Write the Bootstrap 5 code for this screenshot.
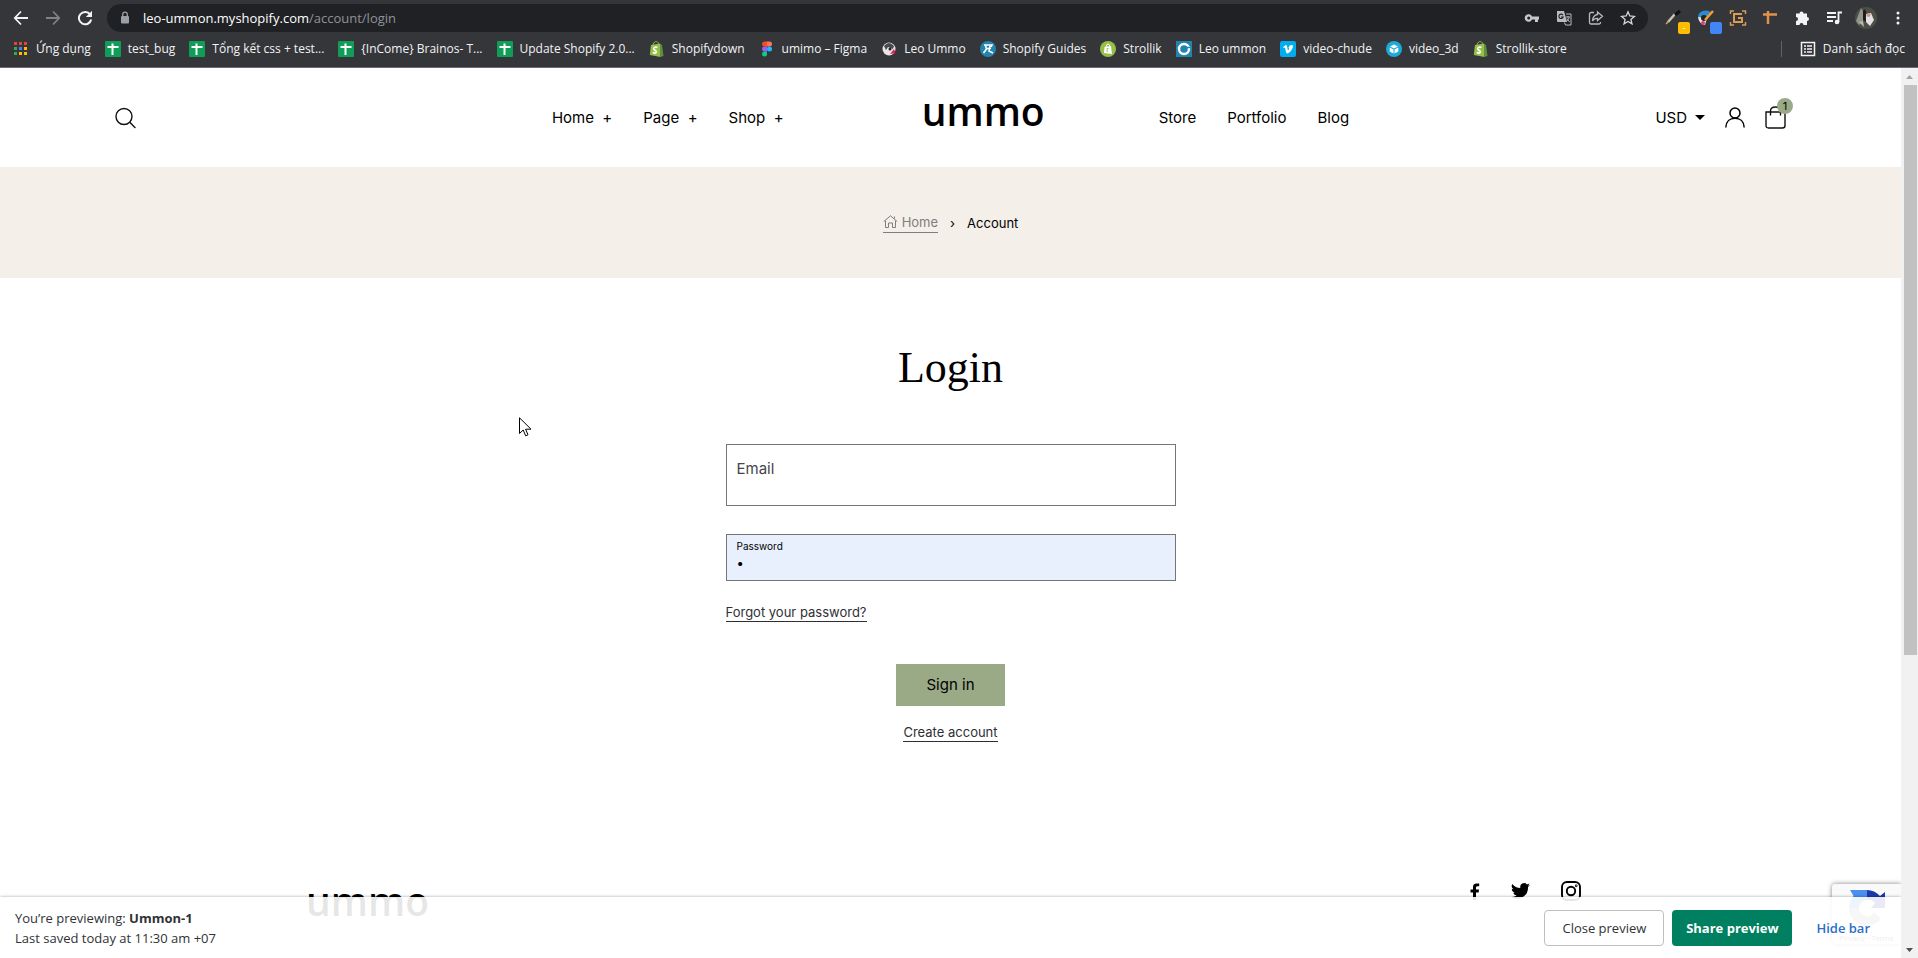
<!DOCTYPE html>
<html lang="en">
<head>
<meta charset="utf-8">
<meta name="viewport" content="width=device-width, initial-scale=1">
<title>Account – Ummo</title>
<link href="https://cdn.jsdelivr.net/npm/bootstrap@5.3.0/dist/css/bootstrap.min.css" rel="stylesheet">
<style>
  :root { --ui: "Open Sans", "Noto Sans", sans-serif; --sage: #9aaa86; --ink: #2f2f33; }
  body { font-family: Inter, "Liberation Sans", sans-serif; font-size: 15px; line-height: 20px; color: #000; }
  a { color: inherit; text-decoration: none; }
  svg { display: block; flex: none; }
  .plain { background: none; border: 0; padding: 0; color: inherit; }

  /* browser toolbar */
  .chrome { background: #35363a; color: #f1f3f4; font-family: var(--ui); border-bottom: 1px solid #6a6b6e; }
  .toolbar { height: 35px; padding: 0 10px 0 11px; gap: 12px; }
  .omnibox { background: #202124; height: 28px; padding: 0 10px 0 12px; font-size: 13px; color: #fff; margin-right: 4px; }
  .omnibox .path { color: #8f9397; }
  .slot { width: 20px; height: 22px; display: flex; align-items: center; justify-content: center; position: relative; }
  .tip { position: absolute; right: -6px; bottom: -5px; width: 12px; height: 12px; border-radius: 2px; font-size: 9px; line-height: 11px; text-align: center; color: #fff; }
  .bookmarks { height: 32px; padding: 0 13px; font-size: 12px; line-height: 16px; white-space: nowrap; padding-bottom: 4px; }
  .bookmarks ul { gap: 14px; }
  .bookmarks a { gap: 7px; }
  .sep { width: 1px; height: 16px; background: #5f6368; margin-right: 11px; }

  /* store page */
  .store-head { height: 99px; padding: 0 115px; display: grid; grid-template-columns: 1fr auto 1fr; align-items: center; }
  .store-head ul { gap: 31px; }
  .wordmark { font: 600 39px/40px "Open Sans", sans-serif; color: #000; }
  .store-head .wordmark { margin: 0 114px 0 138px; margin-top: -14px; }
  .cart-count { position: absolute; left: 12px; top: -8px; width: 16px; height: 16px; border-radius: 50%; background: var(--sage); font-size: 11px; line-height: 16px; text-align: center; }
  .crumbs { background: #f4efe9; height: 111px; font-size: 13px; }
  .crumbs .home { color: #807d7a; border-bottom: 1px solid #807d7a; }
  h1 { font: 400 44px/52px "Liberation Serif", serif; margin: 64px 0 50px; }
  .login { width: 450px; margin: 0 auto; }
  .field { border: 1px solid #75757a; border-radius: 0; padding: 0 10px; }
  .mail { height: 62px; padding-bottom: 14px; width: 100%; color: #000; }
  .mail::placeholder { color: #45454a; opacity: 1; }
  .secret { height: 47px; background: #e8f0fe; padding-top: 4px; }
  .secret label { font-size: 10px; line-height: 14px; display: block; }
  .secret input { background: none; border: 0; padding: 0; display: block; width: 100%; font-size: 13px; line-height: 20px; height: 20px; outline: 0; }
  .ul-link { display: inline-block; font-size: 13px; line-height: 18px; color: var(--ink); border-bottom: 1px solid var(--ink); }
  .signin { background: var(--sage); border: 0; height: 42px; width: 109px; }
  .store-foot { padding: 0 320px 0 306px; margin-top: 139px; }

  /* overlays */
  .captcha { position: absolute; right: 0; bottom: 14px; width: 69px; height: 60px; background: #fafafa; border-radius: 3px 0 0 3px; box-shadow: 0 0 5px #808080; font: 8px/10px Roboto, sans-serif; color: #555; }
  .preview { position: absolute; left: 0; right: 0; bottom: 0; height: 61px; padding: 0 31px 0 15px; background: rgba(255,255,255,.9); box-shadow: 0 0 3px rgba(0,0,0,.35); font: 13px/20px var(--ui); color: #303236; }
  .preview .btn { height: 36px; font: 600 13px/20px var(--ui); border-radius: 4px; padding: 0; width: 120px; }
  .preview .close-it { border: 1px solid #babfc3; background: #fff; color: #303236; font-weight: 500; }
  .preview .share-it { background: #008060; color: #fff; font-weight: 700; margin: 0 24px 0 8px; }
  .preview .hide-it { color: #2c6ecb; font-weight: 600; }
  .pointer { position: absolute; left: 519px; top: 349px; }

  .rail { width: 17px; background: #f1f1f1; }
  .rail .thumb { background: #c1c1c1; margin: 0 1px 0 3px; height: 64%; }
  .rail .arrow { height: 17px; display: flex; align-items: center; justify-content: center; }
</style>
</head>
<body class="vh-100 d-flex flex-column overflow-hidden">

<svg width="0" height="0" class="position-absolute" aria-hidden="true">
  <symbol id="sheet" viewBox="0 0 16 16"><rect width="16" height="16" rx="1" fill="#0f9d58"/><path d="M2.500 6H13.500M7.500 2.500V14" stroke="#fff" stroke-width="2"/></symbol>
  <symbol id="shopbag" viewBox="0 0 16 16"><path d="M2 4 11 2.500 11.500 16 .8 14Z" fill="#95bf47"/><path d="M11 2.500 13 4 14.500 15 11 16Z" fill="#5e8e3e"/><path d="M4 4C4.500 1 6.500.5 7.500.6 9 .8 9.500 2 9.500 3.500" fill="none" stroke="#95bf47"/><path d="M8.500 6.500C6.500 5.500 4.500 6.300 4.800 7.800 5 9.200 7.600 9.300 7.300 11 7 12.500 5 12.200 3.800 11.300" fill="none" stroke="#fff" stroke-width="1.700"/></symbol>
</svg>

<header class="chrome">
  <div class="toolbar d-flex align-items-center">
    <button class="plain slot" aria-label="Back"><svg width="16" height="16" viewBox="0 0 16 16" fill="none" stroke="#f1f3f4" stroke-width="1.800"><path d="M15 8H2M8 1.500 1.800 8 8 14.500"/></svg></button>
    <button class="plain slot" aria-label="Forward"><svg width="16" height="16" viewBox="0 0 16 16" fill="none" stroke="#828387" stroke-width="1.800"><path d="M1 8H14M8 1.500 14.200 8 8 14.500"/></svg></button>
    <button class="plain slot" aria-label="Reload"><svg width="16" height="16" viewBox="0 0 16 16"><path d="M13.200 4.500A6.200 6.200 0 1 0 14.200 9.500" fill="none" stroke="#f1f3f4" stroke-width="2"/><path d="M15 .8V7H8.800Z" fill="#f1f3f4"/></svg></button>
    <div class="omnibox rounded-pill flex-grow-1 d-flex align-items-center">
      <svg width="12" height="14" viewBox="0 0 12 14"><rect x="2" y="5" width="8" height="7.500" rx="1" fill="#9aa0a6"/><path d="M3.700 5V3.500a2.300 2.300 0 0 1 4.600 0V5" fill="none" stroke="#9aa0a6" stroke-width="1.300"/></svg>
      <div class="ms-2 ps-1 flex-grow-1">leo-ummon.myshopify.com<span class="path">/account/login</span></div>
      <div class="d-flex toolbar-icons" style="gap:12px">
        <button class="plain slot" aria-label="Passwords"><svg width="16" height="14" viewBox="0 0 16 14"><path fill="#c4c7ca" fill-rule="evenodd" d="M8 5.500H15V8.500H14V11H11V8.500H8A3.800 3.800 0 1 1 8 5.500ZM4.700 5.500A1.500 1.500 0 1 0 4.700 8.500A1.500 1.500 0 0 0 4.700 5.500"/></svg></button>
        <button class="plain slot" aria-label="Translate"><svg width="16" height="16" viewBox="0 0 16 16"><path d="M1 1H8L11 12H2Q1 12 1 11Z" fill="#b8bbbe"/><path d="M10 4H15V15H9.500L8.500 12.500" fill="none" stroke="#b8bbbe"/><path d="M10 7H14M12 6V7.500M13.500 7.500 10.500 11.500M11 8.500 13.500 12" stroke="#b8bbbe" fill="none"/><path d="M7 5.200A2.200 2.200 0 1 0 7.200 7H5" fill="none" stroke="#202124" stroke-width="1.100"/></svg></button>
        <button class="plain slot" aria-label="Share"><svg width="16" height="16" viewBox="0 0 16 16" fill="none" stroke="#b8bbbe" stroke-width="1.300"><path d="M6 2.500H3A1.500 1.500 0 0 0 1.500 4V12.500A1.500 1.500 0 0 0 3 14H11A1.500 1.500 0 0 0 12.500 12.500V12"/><path d="M9.500 2 14.500 6.300 9.500 10.500V8.300C7 8.300 5.500 9 4.500 11 4.800 7 6.500 5 9.500 4.500Z"/></svg></button>
        <button class="plain slot" aria-label="Bookmark"><svg width="16" height="16" viewBox="0 0 16 16" fill="none" stroke="#d4d6d8" stroke-width="1.300"><path d="m8 1.800 1.800 4.200 4.600.4-3.500 3 1.100 4.500L8 11.500 4 13.900l1.100-4.500-3.500-3 4.600-.4Z"/></svg></button>
      </div>
    </div>
    <button class="plain slot" aria-label="Eyedropper"><svg width="18" height="18" viewBox="0 0 18 18"><path d="M3 13 10 5" stroke="#c8c2b5" stroke-width="2.500"/><path d="M10 6 15 2" stroke="#111" stroke-width="3"/><path d="M1 15 4 12" stroke="#d5a95d" stroke-width="1.500"/></svg><span class="tip" style="background:#fbbc04">-</span></button>
    <button class="plain slot" aria-label="ColorZilla"><svg width="18" height="18" viewBox="0 0 18 18"><path d="M1 8A8 7 0 0 1 14 3L9 9Z" fill="#2e8ad0"/><path d="M1 8Q2 15 8 16L10 9Z" fill="#e8e9ea"/><circle cx="7" cy="9" r="3" fill="#222"/><circle cx="6" cy="14" r="2" fill="#e63a72"/><path d="M8 11 16 2" stroke="#f0a030" stroke-width="2.500"/></svg><span class="tip" style="background:#4285f4"></span></button>
    <button class="plain slot" aria-label="Page ruler"><svg width="18" height="18" viewBox="0 0 18 18" fill="none" stroke="#d99a55" stroke-width="1.500"><path d="M1.500 5V2H5M13 2H16.500V5M16.500 13V16H13M5 16H1.500V13"/><path d="M13 5H5V13H13V9H9" stroke-width="2"/></svg></button>
    <button class="plain slot" aria-label="Measure"><svg width="16" height="16" viewBox="0 0 16 16"><path d="M1 4.500H15M6 1V14" stroke="#e0914b" stroke-width="2.500"/></svg></button>
    <button class="plain slot" aria-label="Extensions"><svg width="16" height="16" viewBox="0 0 16 16"><path fill="#f1f3f4" d="M2 3.500H5.500A2 2 0 0 1 9.500 3.500H13V7A2 2 0 0 1 13 11V15H9.500A2 2 0 0 0 5.500 15H2V11A2 2 0 0 0 2 7Z"/></svg></button>
    <button class="plain slot" aria-label="Media"><svg width="16" height="16" viewBox="0 0 16 16"><path d="M1 3H10M1 7H10M1 11H7M12.500 12V2.500H16" stroke="#f1f3f4" stroke-width="1.800" fill="none"/><circle cx="11" cy="12" r="2.300" fill="#f1f3f4"/></svg></button>
    <button class="plain slot" aria-label="Profile"><svg width="22" height="22" viewBox="0 0 22 22"><circle cx="11" cy="11" r="11" fill="#4b4f45"/><path d="M6 1 9 6 8 14 4 18 1 14Z" fill="#8f9588"/><path d="M8 4 10 2 12 8 11 15 8 13Z" fill="#1d1c20"/><path d="M11 7 16 6 19 13 15 19 11 15Z" fill="#e4e2e4"/><circle cx="13.500" cy="8" r="2" fill="#c99a84"/><path d="M4 15 8 14 9 20Z" fill="#c7b9a3"/></svg></button>
    <button class="plain slot" aria-label="Menu"><svg width="4" height="16" viewBox="0 0 4 16" fill="#f1f3f4"><circle cx="2" cy="3" r="1.500"/><circle cx="2" cy="8" r="1.500"/><circle cx="2" cy="13" r="1.500"/></svg></button>
  </div>
  <nav class="bookmarks d-flex align-items-center justify-content-between" aria-label="Bookmarks">
    <ul class="list-unstyled d-flex m-0">
      <li><a href="#" class="d-flex align-items-center"><svg width="16" height="16" viewBox="0 0 16 16"><g fill="#ea4335"><path d="M1 1h3v3H1zM6 1h3v3H6zM11 1h3v3h-3z"/></g><path fill="#34a853" d="M1 6h3v3H1zM1 11h3v3H1z"/><path fill="#4285f4" d="M6 6h3v3H6z"/><path fill="#fbbc04" d="M11 6h3v3h-3zM6 11h3v3H6zM11 11h3v3h-3z"/></svg>Ứng dụng</a></li>
      <li><a href="#" class="d-flex align-items-center"><svg width="16" height="16"><use href="#sheet"/></svg>test_bug</a></li>
      <li><a href="#" class="d-flex align-items-center"><svg width="16" height="16"><use href="#sheet"/></svg>Tổng kết css + test...</a></li>
      <li><a href="#" class="d-flex align-items-center"><svg width="16" height="16"><use href="#sheet"/></svg>{InCome} Brainos- T...</a></li>
      <li><a href="#" class="d-flex align-items-center"><svg width="16" height="16"><use href="#sheet"/></svg>Update Shopify 2.0...</a></li>
      <li><a href="#" class="d-flex align-items-center"><svg width="16" height="16"><use href="#shopbag"/></svg>Shopifydown</a></li>
      <li><a href="#" class="d-flex align-items-center"><svg width="16" height="16" viewBox="0 0 16 16"><path d="M8 .5H5.500a2.500 2.500 0 0 0 0 5H8Z" fill="#f24e1e"/><path d="M8 .5h2.500a2.500 2.500 0 0 1 0 5H8Z" fill="#ff7262"/><path d="M8 5.500H5.500a2.500 2.500 0 0 0 0 5H8Z" fill="#a259ff"/><circle cx="10.500" cy="8" r="2.500" fill="#1abcfe"/><path d="M8 10.500H5.500A2.500 2.500 0 1 0 8 13Z" fill="#0acf83"/></svg>umimo – Figma</a></li>
      <li><a href="#" class="d-flex align-items-center"><svg width="16" height="16" viewBox="0 0 16 16"><circle cx="8" cy="8" r="6.500" fill="#e9e6e6"/><path d="M3 5Q8-1 13 5L12 8 7 6 5 9Z" fill="#4a4a4c"/><path d="M9 13 13 8 14.500 12Z" fill="#e5195b"/><circle cx="9" cy="8" r="1.500" fill="#222"/></svg>Leo Ummo</a></li>
      <li><a href="#" class="d-flex align-items-center"><svg width="16" height="16" viewBox="0 0 16 16"><circle cx="8" cy="8" r="8" fill="#2185b0"/><path d="M4 4H12L11 6M5.500 4.500 6.500 8 3.500 12M7 7.500H11M10 5 9 10 13 12" stroke="#fff" stroke-width="1.600" fill="none"/></svg>Shopify Guides</a></li>
      <li><a href="#" class="d-flex align-items-center"><svg width="16" height="16" viewBox="0 0 16 16"><circle cx="8" cy="8" r="8" fill="#95bf47"/><path d="M4.500 6 11 5 12 13 4 12Z" fill="#fff"/><path d="M6 6Q6.500 3 8 3T10 5.500" fill="none" stroke="#fff"/><path d="M8.500 7.500Q6.500 7 7 8.500T7 11" fill="none" stroke="#95bf47"/></svg>Strollik</a></li>
      <li><a href="#" class="d-flex align-items-center"><svg width="16" height="16" viewBox="0 0 16 16"><rect width="16" height="16" fill="#2185b0"/><circle cx="8" cy="8" r="5" fill="none" stroke="#fff" stroke-width="2.400"/><path d="M7 11V6.500H14M7 9H11" stroke="#2185b0" stroke-width="1.300" fill="none"/></svg>Leo ummon</a></li>
      <li><a href="#" class="d-flex align-items-center"><svg width="16" height="16" viewBox="0 0 16 16"><rect width="16" height="16" rx="2" fill="#00adef"/><path d="M3 6.200 5.800 4C7.500 3.500 7.300 8.500 8 9.200 8.800 9.200 9.800 7.200 8.500 7 9 4 12.500 3 13 5.200 13 8 9 12.500 7.500 12.500 5.500 12.500 5.700 7 4.800 6.500L3.600 7Z" fill="#fff"/></svg>video-chude</a></li>
      <li><a href="#" class="d-flex align-items-center"><svg width="16" height="16" viewBox="0 0 16 16"><circle cx="8" cy="8" r="8" fill="#1caad9"/><path d="m8 3.500 4 2-4 2-4-2Z M3.700 6.500l3.800 2v4l-3.800-2Z M12.300 6.500l-3.800 2v4l3.800-2Z" fill="#fff"/></svg>video_3d</a></li>
      <li><a href="#" class="d-flex align-items-center"><svg width="16" height="16"><use href="#shopbag"/></svg>Strollik-store</a></li>
    </ul>
    <a href="#" class="d-flex align-items-center"><span class="sep"></span><svg width="16" height="16" viewBox="0 0 16 16" fill="none" stroke="#f1f3f4"><rect x="1.500" y="1.500" width="13" height="13" stroke-width="1.500"/><path d="M4 5H6M7 5H12M4 8H6M7 8H12M4 11H6M7 11H12" stroke-width="1.600"/></svg>Danh sách đọc</a>
  </nav>
</header>

<div class="flex-grow-1 d-flex overflow-hidden">
  <div class="flex-grow-1 position-relative overflow-hidden">
    <header class="store-head">
      <button class="plain justify-self-start me-auto" aria-label="Search"><svg width="21" height="22" viewBox="0 0 21 22" fill="none" stroke="#111" stroke-width="1.400"><circle cx="9" cy="9.500" r="8"/><path d="m14.800 15.300 5.600 5.600"/></svg></button>
      <nav class="d-flex align-items-center" aria-label="Main">
        <ul class="list-unstyled d-flex m-0">
          <li><a href="#">Home &nbsp;+</a></li><li><a href="#">Page &nbsp;+</a></li><li><a href="#">Shop &nbsp;+</a></li>
        </ul>
        <a href="#" class="wordmark">ummo</a>
        <ul class="list-unstyled d-flex m-0">
          <li><a href="#">Store</a></li><li><a href="#">Portfolio</a></li><li><a href="#">Blog</a></li>
        </ul>
      </nav>
      <div class="d-flex align-items-center justify-content-end">
        <button class="plain d-flex align-items-center gap-2">USD<svg width="10" height="5" viewBox="0 0 10 5"><path d="M0 0H10L5 5Z"/></svg></button>
        <a href="#" aria-label="Account" class="mx-3 px-1"><svg width="20" height="21" viewBox="0 0 20 21" fill="none" stroke="#000" stroke-width="1.500"><circle cx="10" cy="6" r="5"/><path d="M.8 20.500C1 14.500 5 11.300 10 11.300S19 14.500 19.200 20.500"/></svg></a>
        <a href="#" aria-label="Cart" class="position-relative"><svg width="21" height="23" viewBox="0 0 21 23" fill="none" stroke="#111" stroke-width="1.400"><path d="M1 6H20V19.500Q20 22 17.500 22H3.500Q1 22 1 19.500Z"/><path d="M5.500 9.500V5Q5.500 1 10.500 1T15.500 5V9.500"/></svg><span class="cart-count">1</span></a>
      </div>
    </header>

    <nav class="crumbs d-flex align-items-center justify-content-center" aria-label="Breadcrumb">
      <a href="#" class="home d-flex align-items-center gap-1"><svg width="15" height="14" viewBox="0 0 15 14" fill="none" stroke="#807d7a"><path d="M.8 6.500 7.500.8 14.200 6.500M2.500 5.500V12.500H5.500V8H9.500V12.500H12.500V5.500M11.500 3.500V1.500"/></svg>Home</a>
      <span class="px-2 mx-1">›</span><span>Account</span>
    </nav>

    <main class="login text-center">
      <h1>Login</h1>
      <form onsubmit="return false">
        <label for="mail" class="visually-hidden">Email address</label>
        <input id="mail" type="email" class="field mail d-block" placeholder="Email">
        <div class="field secret text-start mt-4">
          <label for="pass">Password</label>
          <input id="pass" type="password" value="1">
        </div>
        <div class="text-start after-fields"><a href="#" class="ul-link">Forgot your password?</a></div>
        <button class="signin">Sign in</button>
        <div class="create"><a href="#" class="ul-link">Create account</a></div>
      </form>
    </main>

    <footer class="store-foot d-flex justify-content-between align-items-start">
      <a href="#" class="wordmark">ummo</a>
      <div class="d-flex socials">
        <a href="#" aria-label="Facebook"><svg width="10" height="17" viewBox="0 0 10 17"><path d="M3 17V9.500H.5V6.500H3V4Q3 .5 6.500.5H9.200V3.300H7.500Q6 3.300 6 4.700V6.500H9L8.600 9.500H6V17Z"/></svg></a>
        <a href="#" aria-label="Twitter"><svg width="19" height="16" viewBox="0 0 24 20"><path d="M24 2.400a10 10 0 0 1-2.800.8A5 5 0 0 0 23.300.5a10 10 0 0 1-3.100 1.200A4.900 4.900 0 0 0 11.800 6.200 14 14 0 0 1 1.700 1.100a4.900 4.900 0 0 0 1.500 6.600A5 5 0 0 1 1 7.100a5 5 0 0 0 3.900 4.900 5 5 0 0 1-2.200.1 5 5 0 0 0 4.600 3.400A10 10 0 0 1 0 17.500 14 14 0 0 0 21.500 5Z"/></svg></a>
        <a href="#" aria-label="Instagram"><svg width="20" height="20" viewBox="0 0 20 20" fill="none" stroke="#000" stroke-width="1.900"><rect x="1" y="1" width="18" height="18" rx="5"/><circle cx="10" cy="10" r="4.200"/><circle cx="15.200" cy="4.800" r=".4"/></svg></a>
      </div>
    </footer>

    <svg class="pointer" width="13" height="20" viewBox="0 0 13 20" fill="#fff" stroke="#000"><path d="M.5.800V16.500L4.200 13 6.700 18.800 9 17.800 6.600 12.200H12Z"/></svg>

    <div class="captcha d-flex flex-column align-items-center justify-content-between pt-1">
      <svg width="40" height="40" viewBox="0 0 40 40"><path d="M20 2A18 18 0 0 0 2 20H12A8 8 0 0 1 20 12Z" fill="#4a90f0"/><path d="M3 2H20V12H9Z" fill="#4a90f0"/><path d="M20 2A18 18 0 0 1 33 8L38 4V20H24L28 15A8 8 0 0 0 20 12Z" fill="#1c3aa9"/><path d="M2 20A18 18 0 0 0 34 31L27 24A8 8 0 0 1 12 20Z" fill="#ababab"/></svg>
      <span>Privacy - Terms</span>
    </div>

    <aside class="preview d-flex align-items-center justify-content-between">
      <div>You’re previewing: <strong>Ummon-1</strong><br>Last saved today at 11:30 am +07</div>
      <div class="d-flex align-items-center">
        <button class="btn close-it">Close preview</button>
        <button class="btn share-it">Share preview</button>
        <button class="plain hide-it">Hide bar</button>
      </div>
    </aside>
  </div>
  <div class="rail d-flex flex-column" aria-hidden="true">
    <span class="arrow"><svg width="7" height="4" viewBox="0 0 7 4"><path d="M0 4 3.500 0 7 4Z" fill="#a3a3a3"/></svg></span>
    <span class="thumb"></span>
    <span class="arrow mt-auto"><svg width="7" height="4" viewBox="0 0 7 4"><path d="M0 0H7L3.500 4Z" fill="#505050"/></svg></span>
  </div>
</div>
<style>
  .secret.mt-4 { margin-top: 28px !important; }
  .after-fields { margin: 22px 0 42px; line-height: 18px; display: flex; }
  .create { margin-top: 17px; display: flex; justify-content: center; }
  .signin { display: block; margin: 0 auto; }
  .socials { gap: 31px; align-items: center; }
</style>
<script src="https://cdn.jsdelivr.net/npm/bootstrap@5.3.0/dist/js/bootstrap.bundle.min.js"></script>
</body>
</html>
